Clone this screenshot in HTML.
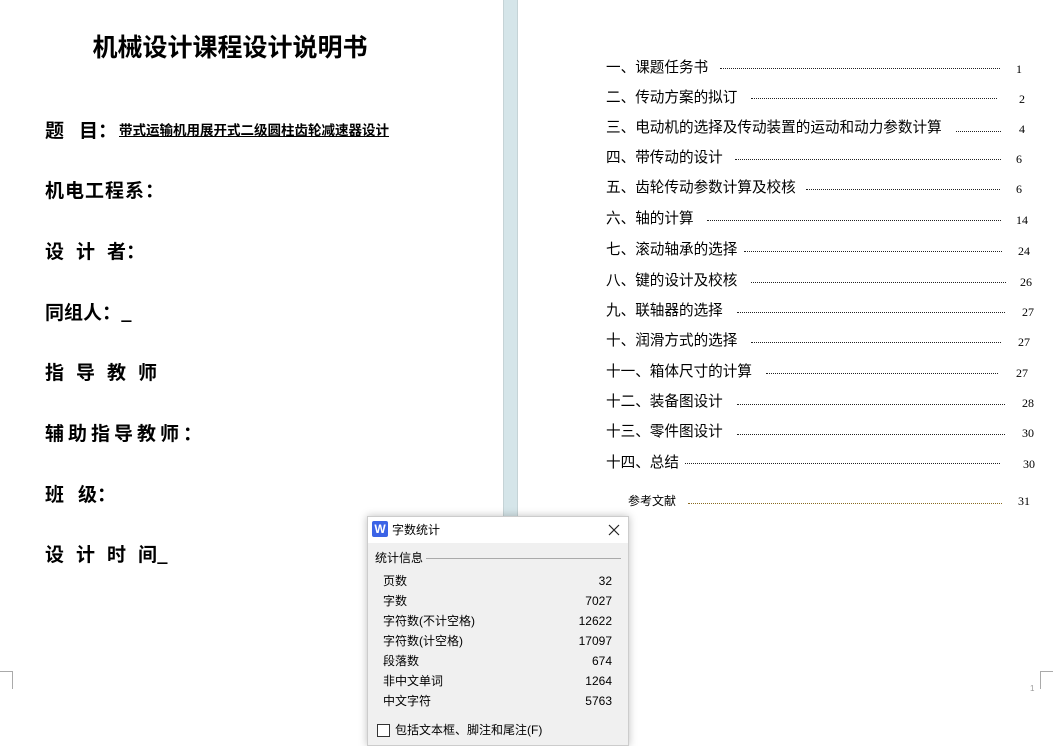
<!DOCTYPE html>
<html><head><meta charset="utf-8"><style>
*{margin:0;padding:0;box-sizing:border-box}
body{width:1053px;height:736px;position:relative;overflow:hidden;background:#fff;font-family:"Liberation Sans","Noto Sans CJK SC",sans-serif;color:#000}
.a{position:absolute;white-space:nowrap}
.L{font-family:"Noto Sans CJK SC",sans-serif;font-weight:bold;font-size:19px;left:45px;line-height:24px}
.c{letter-spacing:0}
.t{font-size:14.6px;line-height:18px}
.d{position:absolute;height:0;border-top:1.5px dotted #222}
.n{font-family:"Liberation Serif",serif;font-size:12px;line-height:14px;text-align:right;width:30px}
.r{position:absolute;left:382px;font-size:12px;line-height:16px;width:230px}
.r span{float:right}
</style></head><body>
<div class="a" style="left:503px;top:0;width:15px;height:736px;background:#d5e5e9;border-left:1px solid #c5d3d6;border-right:1px solid #c5d3d6"></div>

<div class="a" style="left:0;top:30px;width:460px;text-align:center;font-family:'Noto Sans CJK SC',sans-serif;font-weight:bold;font-size:25px;line-height:32px">机械设计课程设计说明书</div>
<div class="a L" style="top:118px"><span style="letter-spacing:15px">题</span>目：</div>
<div class="a" style="left:119px;top:120px;font-weight:bold;font-size:13.5px;line-height:18px;text-decoration:underline;font-family:'Noto Sans CJK SC',sans-serif">带式运输机用展开式二级圆柱齿轮减速器设计</div>
<div class="a L" style="top:178px;letter-spacing:1px">机电工程系：</div>
<div class="a L" style="top:239px"><span style="letter-spacing:12px">设计</span>者：</div>
<div class="a L" style="top:300px">同组人：_</div>
<div class="a L" style="top:360px;letter-spacing:12px">指导教师</div>
<div class="a L" style="top:421px;letter-spacing:4px">辅助指导教师：</div>
<div class="a L" style="top:482px"><span style="letter-spacing:14px">班</span>级：</div>
<div class="a L" style="top:542px"><span style="letter-spacing:12px">设计时</span>间_</div>

<div class="a t" style="left:606px;top:59px">一、课题任务书</div><div class="d" style="left:720px;width:280px;top:68px"></div><div class="a n" style="left:992px;top:62px">1</div>
<div class="a t" style="left:606px;top:89px">二、传动方案的拟订</div><div class="d" style="left:751px;width:246px;top:98px"></div><div class="a n" style="left:995px;top:92px">2</div>
<div class="a t" style="left:606px;top:119px">三、电动机的选择及传动装置的运动和动力参数计算</div><div class="d" style="left:956px;width:45px;top:131px"></div><div class="a n" style="left:995px;top:122px">4</div>
<div class="a t" style="left:606px;top:149px">四、带传动的设计</div><div class="d" style="left:735px;width:266px;top:159px"></div><div class="a n" style="left:992px;top:152px">6</div>
<div class="a t" style="left:606px;top:179px">五、齿轮传动参数计算及校核</div><div class="d" style="left:806px;width:194px;top:189px"></div><div class="a n" style="left:992px;top:182px">6</div>
<div class="a t" style="left:606px;top:210px">六、轴的计算</div><div class="d" style="left:707px;width:294px;top:220px"></div><div class="a n" style="left:998px;top:213px">14</div>
<div class="a t" style="left:606px;top:241px">七、滚动轴承的选择</div><div class="d" style="left:744px;width:258px;top:251px"></div><div class="a n" style="left:1000px;top:244px">24</div>
<div class="a t" style="left:606px;top:272px">八、键的设计及校核</div><div class="d" style="left:751px;width:255px;top:282px"></div><div class="a n" style="left:1002px;top:275px">26</div>
<div class="a t" style="left:606px;top:302px">九、联轴器的选择</div><div class="d" style="left:737px;width:268px;top:312px"></div><div class="a n" style="left:1004px;top:305px">27</div>
<div class="a t" style="left:606px;top:332px">十、润滑方式的选择</div><div class="d" style="left:751px;width:250px;top:342px"></div><div class="a n" style="left:1000px;top:335px">27</div>
<div class="a t" style="left:606px;top:363px">十一、箱体尺寸的计算</div><div class="d" style="left:766px;width:232px;top:373px"></div><div class="a n" style="left:998px;top:366px">27</div>
<div class="a t" style="left:606px;top:393px">十二、装备图设计</div><div class="d" style="left:737px;width:268px;top:404px"></div><div class="a n" style="left:1004px;top:396px">28</div>
<div class="a t" style="left:606px;top:423px">十三、零件图设计</div><div class="d" style="left:737px;width:268px;top:434px"></div><div class="a n" style="left:1004px;top:426px">30</div>
<div class="a t" style="left:606px;top:454px">十四、总结</div><div class="d" style="left:685px;width:315px;top:463px"></div><div class="a n" style="left:1005px;top:457px">30</div>
<div class="a" style="left:628px;top:493px;font-size:12px;line-height:16px">参考文献</div><div class="d" style="left:688px;width:314px;top:503px;border-top-color:#8a6a20"></div><div class="a n" style="left:1000px;top:494px">31</div>

<div class="a" style="left:0;top:671px;width:12px;border-top:1px solid #aaa"></div>
<div class="a" style="left:12px;top:671px;height:18px;border-left:1px solid #aaa"></div>
<div class="a" style="left:1040px;top:671px;width:13px;border-top:1px solid #aaa"></div>
<div class="a" style="left:1040px;top:671px;height:18px;border-left:1px solid #aaa"></div>
<div class="a" style="left:1030px;top:684px;font-size:8px;color:#999">1</div>

<div class="a" style="left:367px;top:516px;width:262px;height:230px;background:#f0f0f0;border:1px solid #ccc;box-shadow:0 0 8px rgba(0,0,0,.25)">
 <div style="height:26px;background:#fff;position:relative">
  <div class="a" style="left:4px;top:4px;width:16px;height:16px;background:#3b63e6;border-radius:2px;color:#fff;font-weight:bold;font-size:12px;line-height:16px;text-align:center">W</div>
  <div class="a" style="left:24px;top:4px;font-size:12px;line-height:18px">字数统计</div>
  <svg class="a" style="left:240px;top:7px" width="12" height="12"><path d="M1 1L11 11M11 1L1 11" stroke="#222" stroke-width="1.2"/></svg>
 </div>
 <div class="a" style="left:7px;top:33px;font-size:12px;line-height:16px">统计信息</div>
 <div class="a" style="left:58px;top:41px;width:195px;border-top:1px solid #aaa"></div>
 <div class="r" style="left:15px;top:56px;width:229px">页数<span>32</span></div>
 <div class="r" style="left:15px;top:76px;width:229px">字数<span>7027</span></div>
 <div class="r" style="left:15px;top:96px;width:229px">字符数(不计空格)<span>12622</span></div>
 <div class="r" style="left:15px;top:116px;width:229px">字符数(计空格)<span>17097</span></div>
 <div class="r" style="left:15px;top:136px;width:229px">段落数<span>674</span></div>
 <div class="r" style="left:15px;top:156px;width:229px">非中文单词<span>1264</span></div>
 <div class="r" style="left:15px;top:176px;width:229px">中文字符<span>5763</span></div>
 <div class="a" style="left:9px;top:207px;width:13px;height:13px;border:1px solid #333;background:#fff"></div>
 <div class="a" style="left:27px;top:205px;font-size:12px;line-height:16px">包括文本框、脚注和尾注(F)</div>
</div>
</body></html>
